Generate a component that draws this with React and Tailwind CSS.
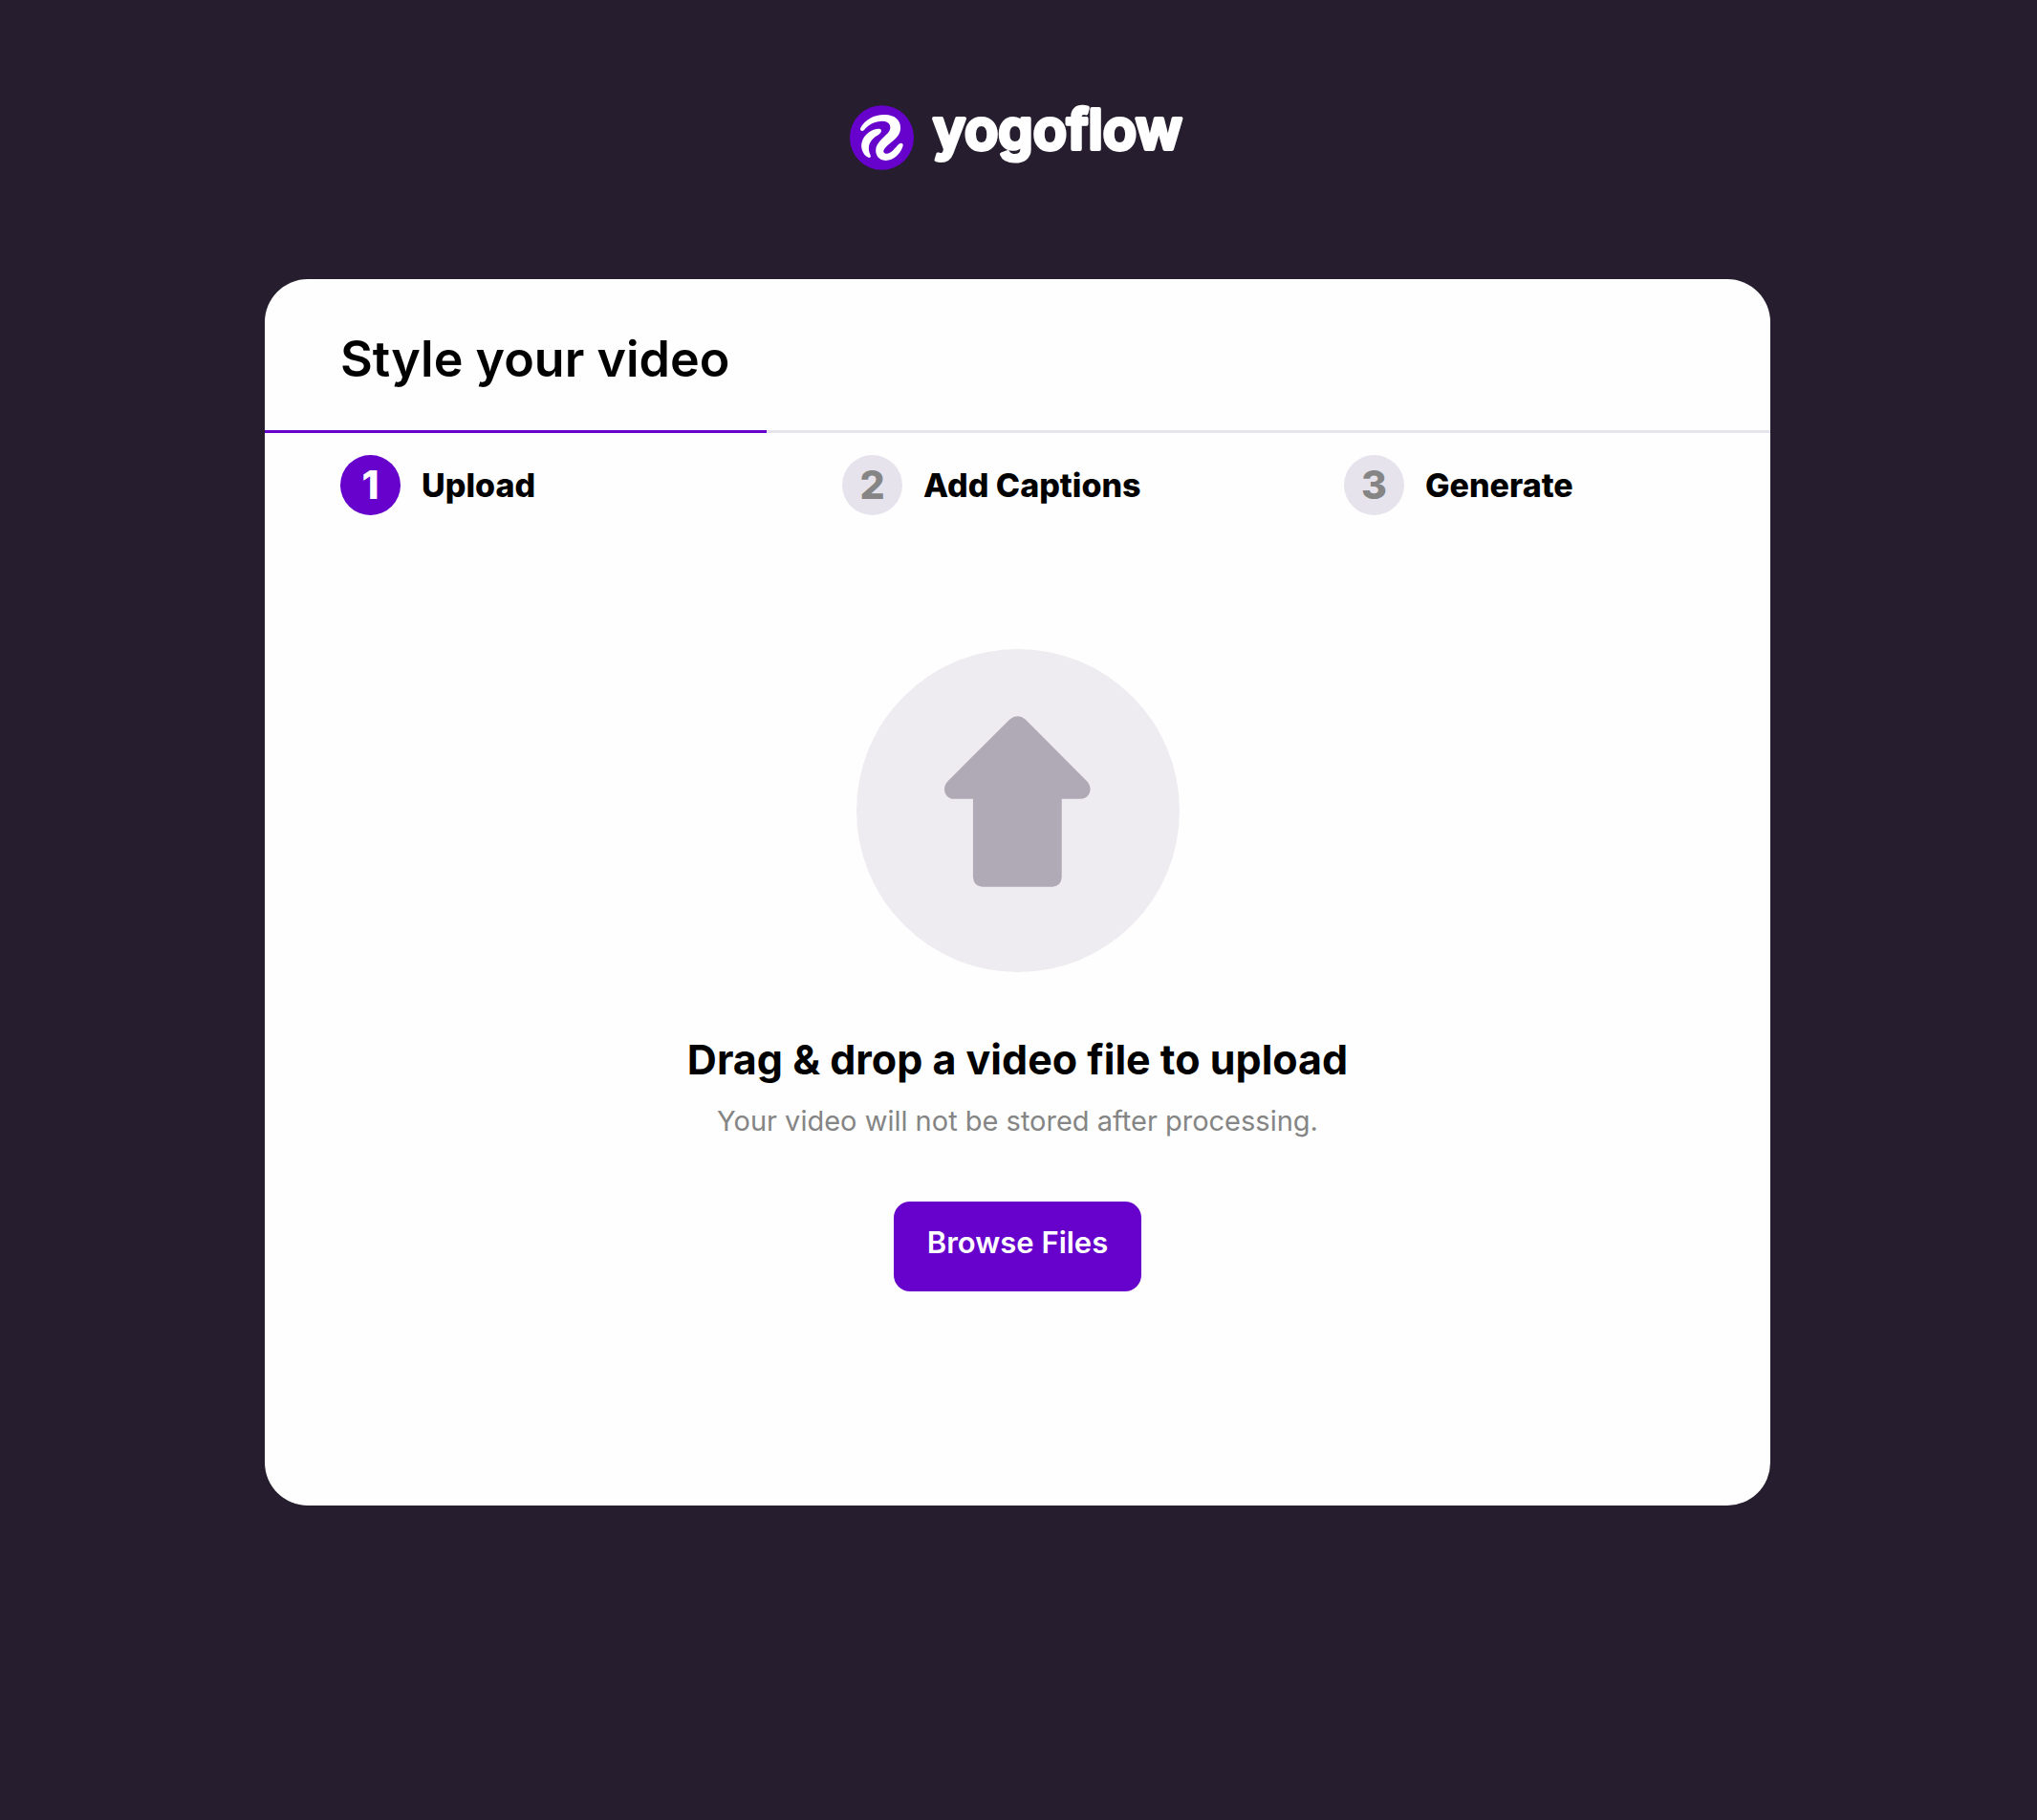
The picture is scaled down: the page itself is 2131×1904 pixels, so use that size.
const steps = ["Upload", "Add Captions", "Generate"];

function Logo() {
  return (
    <a href="#" aria-label="yogoflow" className="flex items-start gap-4">
      <svg viewBox="57 60 202 204" className="h-[68px] w-[67px]" aria-hidden="true">
        <ellipse cx="158" cy="162" rx="101" ry="102" fill="#6602cc" />
        <path
          fill="#fff"
          d="M91 131C105 105 135 89 168 90C200 91 217 107 217 131C217 156 198 168 181 182C168 193 158 204 167 211C183 219 197 197 211 183C219 175 228 180 224 190C216 214 196 234 170 234C149 234 138 219 139 200C141 178 163 163 177 148C192 131 185 110 160 110C135 110 117 121 103 137C96 145 87 139 91 131Z"
        />
        <path
          fill="#fff"
          d="M151 134C130 132 106 149 97 170C88 192 98 215 114 224C120 227 125 223 122 217C113 196 116 179 131 165C140 156 149 154 154 147C158 142 157 135 151 134Z"
        />
      </svg>
      <svg viewBox="0 0 268 84" className="-mt-2 h-[84px] w-[268px] overflow-visible" aria-hidden="true">
        <text
          x="4"
          y="54"
          fill="#fff"
          stroke="#fff"
          strokeWidth="4"
          strokeLinejoin="round"
          className="font-['Inter',sans-serif] text-[58px] font-semibold"
        >
          yogoflow
        </text>
      </svg>
    </a>
  );
}

export default function App() {
  return (
    <div className="flex min-h-screen flex-col items-center bg-[#261e2e] pt-[110px] pr-[26px] pb-20 pl-6 font-['Inter',sans-serif] text-black">
      <Logo />
      <main className="mt-[106px] w-full max-w-[1575px] overflow-hidden rounded-[45px] bg-[#fefefe] pb-[224px]">
        <h1 className="px-[79px] pt-[52px] pb-[42px] text-[52px] leading-[64px] font-semibold">
          Style your video
        </h1>
        <div className="h-[3px] bg-[#e6e4ed]">
          <div className="h-full w-1/3 bg-[#6602cc]" />
        </div>
        <ol className="grid grid-cols-3 pt-[23px]">
          {steps.map((label, i) => (
            <li key={label} className="flex items-center gap-[22px] pl-[79px]">
              <span
                className={
                  i === 0
                    ? "flex size-[63px] items-center justify-center rounded-full bg-[#6602cc] text-[41px] leading-none font-extrabold text-white"
                    : "flex size-[63px] items-center justify-center rounded-full bg-[#e6e3ed] text-[41px] leading-none font-extrabold text-[#858585]"
                }
              >
                {i + 1}
              </span>
              <span className="text-[34px] leading-none font-extrabold">{label}</span>
            </li>
          ))}
        </ol>
        <section className="flex flex-col items-center pt-[140px]">
          <div className="flex size-[338px] items-center justify-center rounded-full bg-[#eeecf1]">
            <svg viewBox="324 266 460 538" className="mb-5 h-[179px] w-[153px]" aria-hidden="true">
              <path
                fill="#b0a9b6"
                d="M529 277Q554 256 579 277L773 472C793 494 780 527 752 527H693V773Q691 801 664 803H443Q416 801 414 773V527H354C326 527 314 494 334 472Z"
              />
            </svg>
          </div>
          <h2 className="mt-[63px] text-[43px] leading-[56px] font-bold">Drag &amp; drop a video file to upload</h2>
          <p className="mt-[17px] text-[29px] leading-[40px] text-[#858585]">
            Your video will not be stored after processing.
          </p>
          <button
            type="button"
            className="mt-16 h-[94px] rounded-[17px] bg-[#6602cc] px-[35px] pb-2 text-[31px] font-semibold text-white"
          >
            Browse Files
          </button>
        </section>
      </main>
    </div>
  );
}
